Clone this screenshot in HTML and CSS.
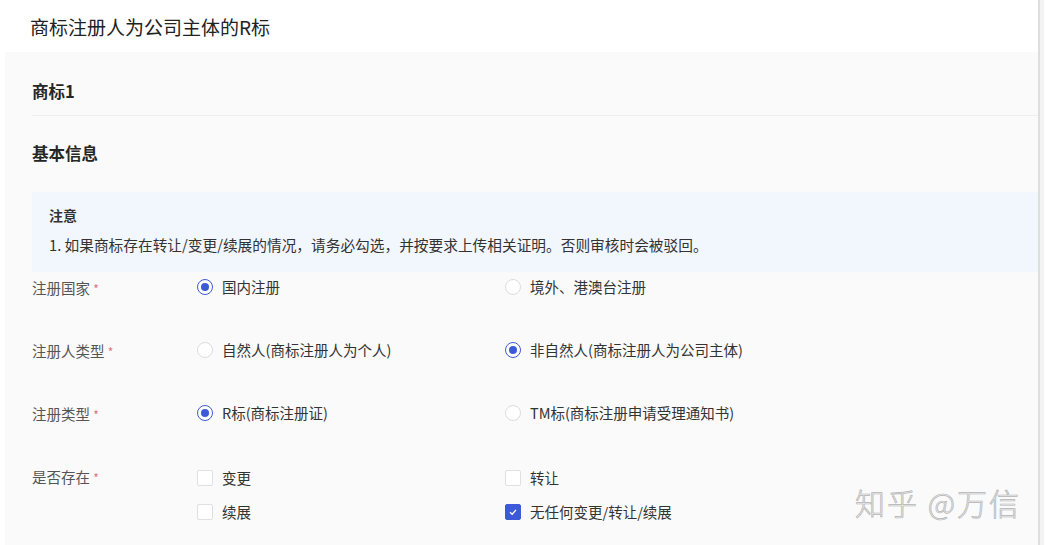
FILE: index.html
```html
<!DOCTYPE html>
<html lang="zh-CN">
<head>
  <meta charset="UTF-8">
  <title>商标注册</title>
  <link rel="stylesheet" href="styles.css">
</head>
<body>

  <div class="page">
    <div class="top-title">商标注册人为公司主体的R标</div>

    <div class="panel">
      <div class="section-title first">商标1</div>
      <div class="section-title">基本信息</div>

      <div class="notice">
        <div class="notice-head">注意</div>
        <div class="notice-text">1. 如果商标存在转让/变更/续展的情况，请务必勾选，并按要求上传相关证明。否则审核时会被驳回。</div>
      </div>

      <div class="form-row">
        <div class="label">注册国家 <span class="req">*</span></div>
        <div class="options">
          <label class="opt"><span class="radio checked"></span>国内注册</label>
          <label class="opt"><span class="radio"></span>境外、港澳台注册</label>
        </div>
      </div>

      <div class="form-row">
        <div class="label">注册人类型 <span class="req">*</span></div>
        <div class="options">
          <label class="opt"><span class="radio"></span>自然人(商标注册人为个人)</label>
          <label class="opt"><span class="radio checked"></span>非自然人(商标注册人为公司主体)</label>
        </div>
      </div>

      <div class="form-row">
        <div class="label">注册类型 <span class="req">*</span></div>
        <div class="options">
          <label class="opt"><span class="radio checked"></span>R标(商标注册证)</label>
          <label class="opt"><span class="radio"></span>TM标(商标注册申请受理通知书)</label>
        </div>
      </div>

      <div class="form-row">
        <div class="label">是否存在 <span class="req">*</span></div>
        <div class="options checks">
          <label class="opt"><span class="box"></span>变更</label>
          <label class="opt"><span class="box"></span>转让</label>
          <label class="opt"><span class="box"></span>续展</label>
          <label class="opt"><span class="box checked">
            <svg width="10" height="10" viewBox="0 0 10 10"><path d="M2 5.2 L4.2 7.2 L8 2.8" fill="none" stroke="#fff" stroke-width="1.3"/></svg>
          </span>无任何变更/转让/续展</label>
        </div>
      </div>

      <div class="watermark">知乎 @万信</div>
    </div>
  </div>

  <div class="scroll-edge"></div>

</body>
</html>
```

FILE: styles.css
```css
body {
  margin: 0;
  font-family: "Noto Sans CJK SC", "Noto Sans", sans-serif;
  background-color: #fff;
  color: #333;
  display: flex;
  height: 545px;
  overflow: hidden;
}

.page {
  width: 1038px;
  display: flex;
  flex-direction: column;
}

/* titulo de cima */
.top-title {
  height: 52px;
  line-height: 54px;
  padding-left: 30px;
  font-size: 19px;
  color: #222;
}

.panel {
  position: relative;
  flex: 1;
  margin-left: 5px;
  padding-left: 27px;
  background-color: #fafafa;
}

.section-title {
  font-size: 16.5px;
  font-weight: bold;
  color: #262626;
  line-height: 24px;
  padding: 25px 0 27px;
}

.section-title.first {
  padding: 27px 0 12px;
  border-bottom: 1px solid #efefef;
}

.notice {
  background-color: #f2f6fd;
  padding: 13px 17px 17px;
  font-size: 14.7px;
  color: #333;
}

.notice-head {
  font-weight: bold;
  font-size: 14px;
  line-height: 20px;
  margin-bottom: 10px;
}

.notice-text {
  line-height: 20px;
}

.form-row {
  display: flex;
  padding: 3px 0 36px;
  font-size: 14.5px;
}

.label {
  width: 165px;
  line-height: 20px;
  padding-top: 3px;
  color: #555;
}

.req {
  color: #e4707a;
  font-size: 12px;
}

.options {
  display: grid;
  grid-template-columns: 308px 308px;
  row-gap: 14px;
}

.options.checks {
  padding-top: 4px;
}

.opt {
  display: flex;
  align-items: center;
  line-height: 20px;
  color: #333;
}

.radio {
  width: 16px;
  height: 16px;
  border: 1px solid #dcdcdc;
  border-radius: 50%;
  background-color: #fff;
  margin-right: 9px;
  box-sizing: border-box;
  display: flex;
  align-items: center;
  justify-content: center;
}

.radio.checked {
  border-color: #3c5ad6;
}

.radio.checked::after {
  content: "";
  width: 8px;
  height: 8px;
  border-radius: 50%;
  background-color: #3c5ad6;
}

.box {
  width: 16px;
  height: 16px;
  border: 1px solid #e0e0e0;
  border-radius: 2px;
  background-color: #fff;
  margin-right: 9px;
  box-sizing: border-box;
  display: flex;
  align-items: center;
  justify-content: center;
}

.box.checked {
  background-color: #3c5ad6;
  border-color: #3c5ad6;
}

.watermark {
  position: absolute;
  left: 850px;
  top: 428px;
  font-size: 30px;
  font-weight: 300;
  color: #ececec;
  -webkit-text-stroke: 0.7px #b4b4b4;
  letter-spacing: 2px;
}

.scroll-edge {
  width: 4px;
  border-left: 2px solid #dedede;
  background-color: #f3f3f3;
}
```
